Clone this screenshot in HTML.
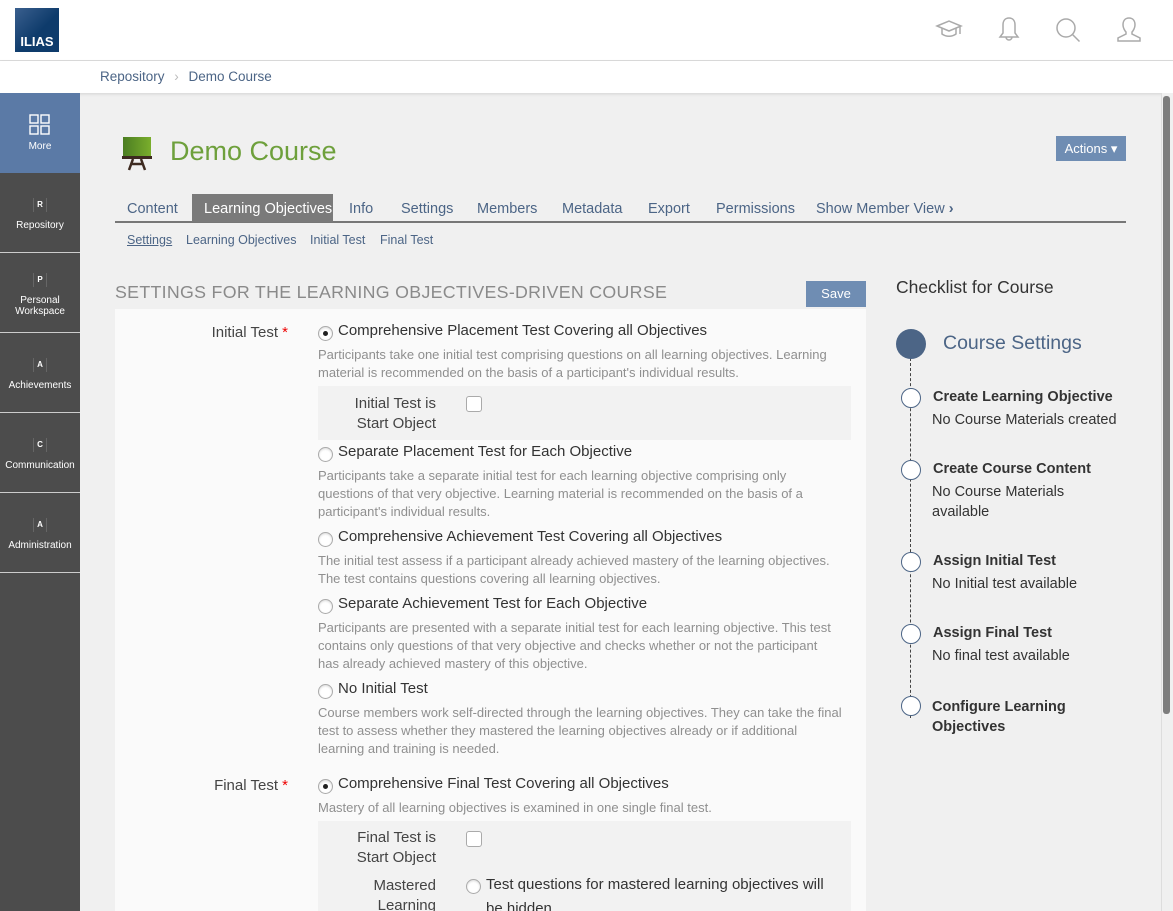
<!DOCTYPE html>
<html><head><meta charset="utf-8">
<style>
*{margin:0;padding:0;box-sizing:border-box}
html{width:1173px;height:911px;overflow:hidden}
body{width:1173px;height:911px;overflow:hidden;background:#f0f0f0;font-family:"Liberation Sans",sans-serif;color:#333;position:relative}
.a{position:absolute;white-space:nowrap}
.hdr{left:0;top:0;width:1173px;height:61px;background:#fff;border-bottom:1px solid #ddd}
.bc{left:0;top:61px;width:1173px;height:32px;background:#fff;box-shadow:0 1px 3px rgba(0,0,0,.12)}
.side{left:0;top:93px;width:80px;height:818px;background:#4c4c4c}
.tile{position:absolute;left:0;width:80px;height:80px;border-bottom:1px solid #ccc;color:#fff;font-size:10px;text-align:center}
.tile .ic{position:absolute;left:33px;top:22px;width:14px;height:14px;border-left:1px solid #666;border-right:1px solid #666;font-size:8px;font-weight:bold;line-height:14px}
.tile .lb{position:absolute;left:0;width:80px;line-height:11px}
.tab{top:201px;font-size:14.5px;color:#4c6586}
.sub{top:233px;font-size:12.5px;color:#4c6586}
.lbl{font-size:15px;color:#444;text-align:right}
.rad{width:15px;height:15px;border:1px solid #aaa;border-radius:50%;background:#fff;box-shadow:inset 0 1px 2px rgba(0,0,0,.15)}
.rad.on::after{content:"";position:absolute;left:4px;top:4px;width:5px;height:5px;border-radius:50%;background:#222}
.opt{font-size:15px;color:#333}
.desc{font-size:13px;color:#8f8f8f;line-height:18px}
.chk{width:16px;height:16px;border:1px solid #aaa;border-radius:3px;background:#fff}
.circ{width:20px;height:20px;border:1.5px solid #4c6586;border-radius:50%;background:#fff}
.st{font-size:14.5px;font-weight:bold;color:#333}
.sd{font-size:14.5px;color:#333;line-height:20px}
</style></head><body>
<div class="a hdr"></div>
<div class="a" style="left:15px;top:8px;width:44px;height:44px;background:linear-gradient(135deg,#3a5f8e,#0e3b6b 55%);color:#fff;font-weight:bold;font-size:13px;padding-top:26px;text-align:center">ILIAS</div>
<svg class="a" style="left:935px;top:17px" width="28" height="26" viewBox="0 0 28 26" fill="none" stroke="#aaa" stroke-width="1.5"><path d="M2 9l12-5 12 5-12 5z"/><path d="M7 11v6c4 3 10 3 14 0v-6"/><path d="M25 10v7"/></svg>
<svg class="a" style="left:997px;top:16px" width="24" height="27" viewBox="0 0 24 27" fill="none" stroke="#aaa" stroke-width="1.5"><path d="M12 2c-4 0-6 3-6 7v8l-3 4h18l-3-4V9c0-4-2-7-6-7z"/><path d="M9 21a3 3 0 006 0"/></svg>
<svg class="a" style="left:1055px;top:17px" width="28" height="26" viewBox="0 0 28 26" fill="none" stroke="#aaa" stroke-width="1.5"><circle cx="11" cy="11" r="9"/><path d="M17.5 17.5l7 7"/></svg>
<svg class="a" style="left:1115px;top:16px" width="28" height="27" viewBox="0 0 28 27" fill="none" stroke="#aaa" stroke-width="1.5"><path d="M14 2c-4 0-6 3-6 7 0 3 2 6 3 7v2l-8 4v3h22v-3l-8-4v-2c1-1 3-4 3-7 0-4-2-7-6-7z"/></svg>
<div class="a bc"></div>
<div class="a" style="left:100px;top:69px;font-size:13.5px;color:#4c6586">Repository <span style="color:#bbb;margin:0 6px">&#x203A;</span> Demo Course</div>
<div class="a side"></div>
<div class="tile" style="top:93px;background:#5b7aa6;border:none">
<svg style="position:absolute;left:29px;top:21px" width="22" height="22" fill="none" stroke="#fff" stroke-width="1.4"><rect x="1" y="1" width="8" height="8"/><rect x="12" y="1" width="8" height="8"/><rect x="1" y="12" width="8" height="8"/><rect x="12" y="12" width="8" height="8"/></svg>
<div class="lb" style="top:48px">More</div></div>
<div class="tile" style="top:173px"><div class="ic" style="top:25px">R</div><div class="lb" style="top:47px">Repository</div></div>
<div class="tile" style="top:253px"><div class="ic" style="top:20px">P</div><div class="lb" style="top:42px">Personal<br>Workspace</div></div>
<div class="tile" style="top:333px"><div class="ic" style="top:25px">A</div><div class="lb" style="top:47px">Achievements</div></div>
<div class="tile" style="top:413px"><div class="ic" style="top:25px">C</div><div class="lb" style="top:47px">Communication</div></div>
<div class="tile" style="top:493px"><div class="ic" style="top:25px">A</div><div class="lb" style="top:47px">Administration</div></div>
<div class="a" style="left:1161px;top:93px;width:12px;height:818px;background:#f0f0f0;border-left:1px solid #ddd"></div>
<div class="a" style="left:1163px;top:96px;width:7px;height:618px;background:#7d7d7d;border-radius:3px"></div>

<svg class="a" style="left:122px;top:136px" width="30" height="35"><defs><linearGradient id="g"><stop offset="0" stop-color="#4b7d22"/><stop offset="1" stop-color="#7aae2c"/></linearGradient></defs><rect x="1" y="1" width="28" height="20" fill="url(#g)"/><rect x="0" y="20" width="30" height="3" fill="#3d2a20"/><path d="M7 34l4-11M23 34l-4-11M9 28h12" stroke="#3d2a20" stroke-width="2.5"/></svg>
<div class="a" style="left:170px;top:136px;font-size:27px;color:#6ea03c">Demo Course</div>
<div class="a" style="left:1056px;top:136px;width:70px;height:25px;background:#6f8db3;color:#fff;font-size:13px;line-height:25px;text-align:center">Actions &#9662;</div>

<div class="a" style="left:115px;top:221px;width:1011px;height:2px;background:#777"></div>
<div class="a" style="left:192px;top:194px;width:141px;height:28px;background:#7a7a7a"></div>
<div class="a tab" style="left:127px">Content</div>
<div class="a tab" style="left:204px;color:#fff">Learning Objectives</div>
<div class="a tab" style="left:349px">Info</div>
<div class="a tab" style="left:401px">Settings</div>
<div class="a tab" style="left:477px">Members</div>
<div class="a tab" style="left:562px">Metadata</div>
<div class="a tab" style="left:648px">Export</div>
<div class="a tab" style="left:716px">Permissions</div>
<div class="a tab" style="left:816px">Show Member View <b>&#x203A;</b></div>
<div class="a sub" style="left:127px;text-decoration:underline">Settings</div>
<div class="a sub" style="left:186px">Learning Objectives</div>
<div class="a sub" style="left:310px">Initial Test</div>
<div class="a sub" style="left:380px">Final Test</div>

<div class="a" style="left:115px;top:282px;font-size:17.8px;color:#8a8a8a;letter-spacing:.3px">SETTINGS FOR THE LEARNING OBJECTIVES-DRIVEN COURSE</div>
<div class="a" style="left:806px;top:281px;width:60px;height:26px;background:#6f8db3;color:#fff;font-size:13px;line-height:26px;text-align:center">Save</div>
<div class="a" style="left:115px;top:309px;width:751px;height:602px;background:#fafafa"></div>

<div class="a lbl" style="left:150px;top:324px;width:138px">Initial Test <span style="color:#e00">*</span></div>
<div class="a rad on" style="left:318px;top:326px"></div>
<div class="a opt" style="left:338px;top:322px">Comprehensive Placement Test Covering all Objectives</div>
<div class="a desc" style="left:318px;top:346px">Participants take one initial test comprising questions on all learning objectives. Learning<br>material is recommended on the basis of a participant's individual results.</div>
<div class="a" style="left:318px;top:386px;width:533px;height:54px;background:#f2f2f2"></div>
<div class="a lbl" style="left:318px;top:394px;width:118px;line-height:20px;text-align:right">Initial Test is<br><span style="margin-right:0">Start Object</span></div>
<div class="a chk" style="left:466px;top:396px"></div>
<div class="a rad" style="left:318px;top:447px"></div>
<div class="a opt" style="left:338px;top:443px">Separate Placement Test for Each Objective</div>
<div class="a desc" style="left:318px;top:467px">Participants take a separate initial test for each learning objective comprising only<br>questions of that very objective. Learning material is recommended on the basis of a<br>participant's individual results.</div>
<div class="a rad" style="left:318px;top:532px"></div>
<div class="a opt" style="left:338px;top:528px">Comprehensive Achievement Test Covering all Objectives</div>
<div class="a desc" style="left:318px;top:552px">The initial test assess if a participant already achieved mastery of the learning objectives.<br>The test contains questions covering all learning objectives.</div>
<div class="a rad" style="left:318px;top:599px"></div>
<div class="a opt" style="left:338px;top:595px">Separate Achievement Test for Each Objective</div>
<div class="a desc" style="left:318px;top:619px">Participants are presented with a separate initial test for each learning objective. This test<br>contains only questions of that very objective and checks whether or not the participant<br>has already achieved mastery of this objective.</div>
<div class="a rad" style="left:318px;top:684px"></div>
<div class="a opt" style="left:338px;top:680px">No Initial Test</div>
<div class="a desc" style="left:318px;top:704px">Course members work self-directed through the learning objectives. They can take the final<br>test to assess whether they mastered the learning objectives already or if additional<br>learning and training is needed.</div>

<div class="a lbl" style="left:150px;top:777px;width:138px">Final Test <span style="color:#e00">*</span></div>
<div class="a rad on" style="left:318px;top:779px"></div>
<div class="a opt" style="left:338px;top:775px">Comprehensive Final Test Covering all Objectives</div>
<div class="a desc" style="left:318px;top:799px">Mastery of all learning objectives is examined in one single final test.</div>
<div class="a" style="left:318px;top:821px;width:533px;height:90px;background:#f2f2f2"></div>
<div class="a lbl" style="left:318px;top:828px;width:118px;line-height:20px">Final Test is<br>Start Object</div>
<div class="a chk" style="left:466px;top:831px"></div>
<div class="a lbl" style="left:318px;top:876px;width:118px;line-height:20px;height:35px;overflow:hidden">Mastered<br>Learning</div>
<div class="a rad" style="left:466px;top:879px"></div>
<div class="a opt" style="left:486px;top:873px;line-height:24px;height:38px;overflow:hidden">Test questions for mastered learning objectives will<br>be hidden</div>

<div class="a" style="left:896px;top:277px;font-size:17.5px;color:#333">Checklist for Course</div>
<div class="a" style="left:910px;top:358px;height:360px;border-left:1px dashed #444"></div>
<div class="a" style="left:896px;top:329px;width:30px;height:30px;border-radius:50%;background:#4c6586"></div>
<div class="a" style="left:943px;top:332px;font-size:19.5px;color:#4c6586">Course Settings</div>
<div class="a circ" style="left:901px;top:388px"></div>
<div class="a st" style="left:933px;top:389px">Create Learning Objective</div>
<div class="a sd" style="left:932px;top:410px">No Course Materials created</div>
<div class="a circ" style="left:901px;top:460px"></div>
<div class="a st" style="left:933px;top:461px">Create Course Content</div>
<div class="a sd" style="left:932px;top:482px">No Course Materials<br>available</div>
<div class="a circ" style="left:901px;top:552px"></div>
<div class="a st" style="left:933px;top:553px">Assign Initial Test</div>
<div class="a sd" style="left:932px;top:574px">No Initial test available</div>
<div class="a circ" style="left:901px;top:624px"></div>
<div class="a st" style="left:933px;top:625px">Assign Final Test</div>
<div class="a sd" style="left:932px;top:646px">No final test available</div>
<div class="a circ" style="left:901px;top:696px"></div>
<div class="a st" style="left:932px;top:697px;line-height:20px">Configure Learning<br>Objectives</div>
</body></html>
